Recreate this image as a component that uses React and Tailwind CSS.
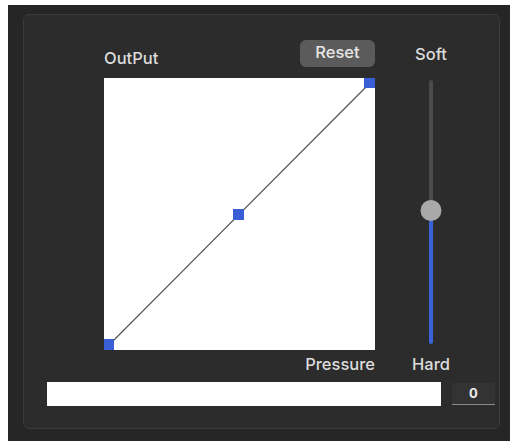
const Handle = ({ x, y }) => (
  <rect x={x} y={y} width="11" height="11" fill="#3a5ed6" />
);

const PressureCurve = () => {
  return (
    <div className="w-[271px] h-[272px] bg-white">
      <svg width="271" height="272" viewBox="0 0 271 272">
        <line x1="5" y1="267" x2="266" y2="5" stroke="#555" strokeWidth="1.2" />
        <Handle x={-1} y={261} />
        <Handle x={129} y={131} />
        <Handle x={260} y={-1} />
      </svg>
    </div>
  );
};

const VerticalSlider = () => {
  return (
    <div className="relative flex justify-center h-[264px] w-full">
      <div className="flex flex-col items-center w-[4px]">
        <div className="w-[4px] h-[131px] bg-[#4a4a4a] rounded-t-full" />
        <div className="w-[4px] h-[133px] bg-[#3b63d9] rounded-b-full" />
      </div>
      <div className="absolute top-[120px] left-1/2 -translate-x-1/2 w-[21px] h-[21px] rounded-full bg-[#a9a9a9]" />
    </div>
  );
};

export default function App() {
  return (
    <div
      className="bg-white w-[517px] h-[441px] overflow-hidden pl-[8px] pt-[5px]"
      style={{ fontFamily: "Inter, 'Liberation Sans', sans-serif" }}
    >
      <div className="w-[502px] h-[436px] bg-[#262626] pl-[15px] pt-[9px]">
        <div className="w-[477px] h-[415px] bg-[#2c2c2c] border border-[#3a3a3a] rounded-[6px] pt-[25px] text-[#dcdcdc]">
          <div className="flex">
            <div className="ml-[80px] w-[271px] flex flex-col">
              <div className="flex items-end justify-between h-[38px] pb-[11px]">
                <span className="text-[16.5px] font-medium leading-[20px] -mb-[1px]">
                  OutPut
                </span>
                <button className="h-[27px] w-[75px] rounded-[6px] bg-[#5b5b5b] text-[16.5px] font-medium text-[#e6e6e6] leading-none pb-[2px]">
                  Reset
                </button>
              </div>
              <PressureCurve />
              <div className="text-right text-[16.5px] font-medium leading-[20px] mt-[4px]">
                Pressure
              </div>
            </div>
            <div className="ml-[30px] w-[52px] flex flex-col items-center">
              <span className="text-[16.5px] font-medium leading-[20px] mt-[4px]">
                Soft
              </span>
              <div className="mt-[16px] w-full">
                <VerticalSlider />
              </div>
              <span className="text-[16.5px] font-medium leading-[20px] mt-[10px]">
                Hard
              </span>
            </div>
          </div>
          <div className="flex items-center mt-[8px] ml-[23px]">
            <div className="w-[394px] h-[24px] bg-white" />
            <div className="ml-[11px] w-[43px] h-[22px] bg-[#333333] border-b border-[#8a8a8a] flex items-center justify-center text-[13px] font-bold text-[#eeeeee]">
              0
            </div>
          </div>
        </div>
      </div>
    </div>
  );
}
